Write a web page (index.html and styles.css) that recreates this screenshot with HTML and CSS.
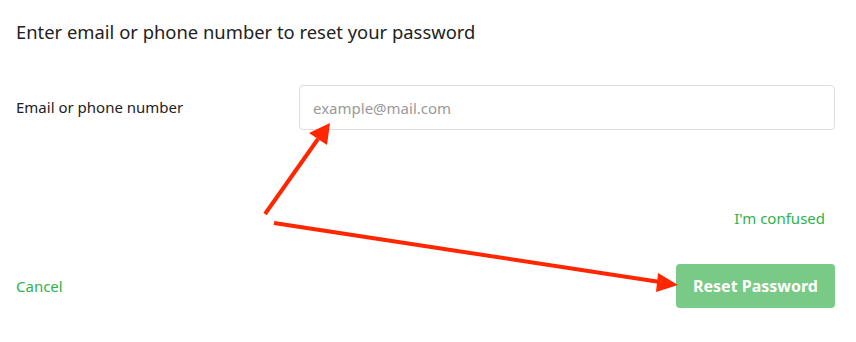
FILE: index.html
```html
<!DOCTYPE html>
<html>
<head>
<meta charset="utf-8">
<link rel="stylesheet" href="styles.css">
</head>
<body>
<div class="page">
  <h1 class="title">Enter email or phone number to reset your password</h1>
  <div class="field">
    <label class="label" for="email">Email or phone number</label>
    <input class="input" id="email" type="text" placeholder="example@mail.com">
  </div>
  <div class="help"><a class="link" href="#">I'm confused</a></div>
  <div class="actions">
    <a class="link" href="#">Cancel</a>
    <button class="btn">Reset Password</button>
  </div>
  <svg class="arrows" width="856" height="342" viewBox="0 0 856 342">
    <line x1="265" y1="214" x2="318" y2="139" stroke="#ff2600" stroke-width="4"/>
    <polygon points="330,123 309,133 327,145" fill="#ff2600"/>
    <line x1="274" y1="223" x2="660" y2="282" stroke="#ff2600" stroke-width="4"/>
    <polygon points="678,285 658,273 656,292" fill="#ff2600"/>
  </svg>
</div>
</body>
</html>
```
FILE: styles.css
```css
html, body { margin: 0; padding: 0; background: #fff; }
body { font-family: "Noto Sans", "Lato", sans-serif; color: #222; }
.page { position: relative; width: 856px; height: 342px; padding: 0 21px 0 16px; box-sizing: border-box; }
.title { margin: 0; padding-top: 20px; font-size: 18.4px; font-weight: 400; line-height: 24px; color: #222; }
.field { display: flex; align-items: center; margin-top: 41px; }
.label { width: 283px; font-size: 15px; color: #222; padding-bottom: 2px; }
.input { flex: 1; height: 45px; box-sizing: border-box; border: 1px solid #dedede; border-radius: 4px; padding: 0 13px; font-family: inherit; font-size: 15px; color: #222; outline: none; }
.input::placeholder { color: #9a9a9a; }
.help { display: flex; justify-content: flex-end; margin-top: 78px; padding-right: 10px; }
.link { color: #2fb14b; text-decoration: none; font-size: 15px; line-height: 20px; }
.actions { display: flex; justify-content: space-between; align-items: center; margin-top: 36px; }
.btn { width: 159px; height: 44px; border: none; border-radius: 4px; background: #79c987; color: #fff; font-family: inherit; font-size: 16px; font-weight: 700; }
.arrows { position: absolute; left: 0; top: 0; pointer-events: none; }
```
